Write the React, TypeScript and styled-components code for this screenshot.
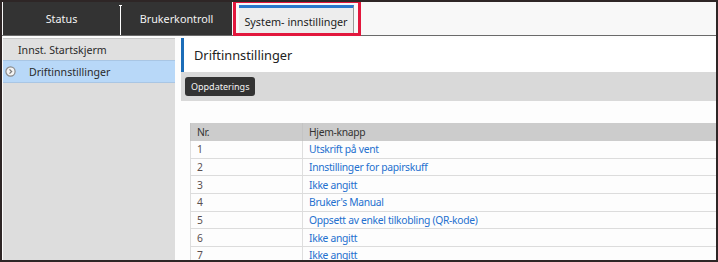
import React from "react";
import styled, { createGlobalStyle } from "styled-components";

const GlobalStyle = createGlobalStyle`
  html, body {
    margin: 0;
    padding: 0;
    background: #ffffff;
  }
  body {
    font-family: "Noto Sans", "Open Sans", sans-serif;
  }
`;

const Frame = styled.div`
  position: relative;
  width: 718px;
  height: 262px;
  box-sizing: border-box;
  border: 2px solid #2e2626;
  background: #fdfdfd;
  display: flex;
  flex-direction: column;
  overflow: hidden;
`;

const TabBar = styled.div`
  display: flex;
  align-items: stretch;
  height: 33px;
  background: #f8f8f8;
  border-bottom: 1px solid #6a6a6a;
  padding-left: 1px;
  flex-shrink: 0;
`;

const DarkTab = styled.div<{ $width: number }>`
  width: ${(p) => p.$width}px;
  background: #333333;
  color: #f2f2f2;
  font-size: 10.8px;
  display: flex;
  align-items: center;
  justify-content: center;
`;

const Separator = styled.div`
  position: relative;
  width: 1px;
  background: #333333;
  &::after {
    content: "";
    position: absolute;
    left: 0;
    top: 3px;
    bottom: 0;
    width: 1px;
    background: #ffffff;
  }
  &::before {
    content: "";
    position: absolute;
    left: -1px;
    top: 3px;
    width: 3px;
    height: 1px;
    background: #ffffff;
  }
`;

const ActiveTab = styled.div`
  margin: 3px 0 0 7px;
  width: 114px;
  background: #ededed;
  border-top: 3px solid #2a78cc;
  border-right: 1px solid #9a9a9a;
  color: #222222;
  font-size: 10.8px;
  display: flex;
  align-items: center;
  justify-content: center;
`;

const Highlight = styled.div`
  position: absolute;
  left: 231px;
  top: -2px;
  width: 128px;
  height: 36px;
  box-sizing: border-box;
  border: 3px solid #e2173d;
  pointer-events: none;
`;

const Body = styled.div`
  flex: 1;
  display: flex;
  min-height: 0;
`;

const Sidebar = styled.div`
  width: 172px;
  margin: 2px 0 0 1px;
  background: #dddddd;
  display: flex;
  flex-direction: column;
  flex-shrink: 0;
`;

const SideItem = styled.div<{ $active?: boolean }>`
  height: 21px;
  flex-shrink: 0;
  display: flex;
  align-items: center;
  gap: 13px;
  padding-left: ${(p) => (p.$active ? 2 : 15)}px;
  background: ${(p) => (p.$active ? "#b8d8f8" : "#e0e0e0")};
  border-top: 1px solid ${(p) => (p.$active ? "#a9c6e4" : "#c8c8c8")};
  border-bottom: ${(p) => (p.$active ? "1px solid #a9c6e4" : "none")};
  color: #2a2a2a;
  font-size: 10.6px;
`;

const Content = styled.div`
  flex: 1;
  margin-left: 6px;
  display: flex;
  flex-direction: column;
  min-width: 0;
`;

const TitleBar = styled.div`
  height: 34px;
  flex-shrink: 0;
  margin-top: 2px;
  border-left: 3px solid #1c6db8;
  padding-left: 10px;
  display: flex;
  align-items: center;
  background: #ffffff;
  color: #222222;
  font-size: 12.8px;
`;

const ActionBand = styled.div`
  height: 29px;
  flex-shrink: 0;
  background: #d9d9d9;
  display: flex;
  align-items: flex-start;
  padding: 5px 0 0 4px;
  box-sizing: border-box;
`;

const DarkButton = styled.button`
  height: 19px;
  padding: 0 6px;
  border: none;
  border-radius: 3px;
  background: #333333;
  color: #f4f4f4;
  font-family: "Noto Sans", sans-serif;
  font-size: 9px;
  line-height: 19px;
`;

const Table = styled.table`
  margin: 22px 0 0 9px;
  width: calc(100% - 9px);
  flex-shrink: 0;
  border-collapse: collapse;
  font-size: 10.3px;
  letter-spacing: -0.3px;
`;

const HeadCell = styled.th<{ $width?: number }>`
  width: ${(p) => (p.$width ? `${p.$width}px` : "auto")};
  height: 18px;
  padding: 0 0 0 6px;
  background: #cccccc;
  color: #333333;
  font-weight: normal;
  text-align: left;
  border-left: 1px solid #c4c4c4;
`;

const Cell = styled.td<{ $link?: boolean }>`
  height: 16.7px;
  padding: 0 0 0 6px;
  color: ${(p) => (p.$link ? "#2470cf" : "#5a4f4f")};
  border-bottom: 1px solid #dcdcdc;
  border-left: 1px solid #dedede;
  white-space: nowrap;
`;

function CircleArrow() {
  return (
    <svg width="11" height="11" viewBox="0 0 11 11">
      <circle cx="5.5" cy="5.5" r="4.6" fill="#f4f4f4" stroke="#8a8a8a" strokeWidth="1.2" />
      <path d="M4.5 3.4 L6.6 5.5 L4.5 7.6" fill="none" stroke="#7a7a7a" strokeWidth="1.3" />
    </svg>
  );
}

const rows = [
  { nr: "1", label: "Utskrift på vent" },
  { nr: "2", label: "Innstillinger for papirskuff" },
  { nr: "3", label: "Ikke angitt" },
  { nr: "4", label: "Bruker's Manual" },
  { nr: "5", label: "Oppsett av enkel tilkobling (QR-kode)" },
  { nr: "6", label: "Ikke angitt" },
  { nr: "7", label: "Ikke angitt" },
];

export default function App() {
  return (
    <>
      <GlobalStyle />
      <Frame>
        <TabBar>
          <DarkTab $width={117}>Status</DarkTab>
          <Separator />
          <DarkTab $width={111}>Brukerkontroll</DarkTab>
          <ActiveTab>System- innstillinger</ActiveTab>
        </TabBar>
        <Body>
          <Sidebar>
            <SideItem>Innst. Startskjerm</SideItem>
            <SideItem $active>
              <CircleArrow />
              Driftinnstillinger
            </SideItem>
          </Sidebar>
          <Content>
            <TitleBar>Driftinnstillinger</TitleBar>
            <ActionBand>
              <DarkButton type="button">Oppdaterings</DarkButton>
            </ActionBand>
            <Table>
              <thead>
                <tr>
                  <HeadCell $width={105}>Nr.</HeadCell>
                  <HeadCell>Hjem-knapp</HeadCell>
                </tr>
              </thead>
              <tbody>
                {rows.map((r) => (
                  <tr key={r.nr}>
                    <Cell>{r.nr}</Cell>
                    <Cell $link>{r.label}</Cell>
                  </tr>
                ))}
              </tbody>
            </Table>
          </Content>
        </Body>
        <Highlight />
      </Frame>
    </>
  );
}
